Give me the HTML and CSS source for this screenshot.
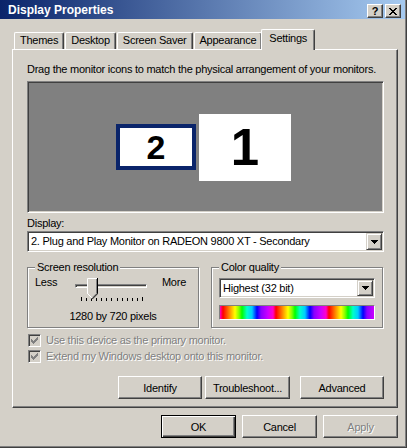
FILE: index.html
```html
<!DOCTYPE html>
<html lang="en">
<head>
  <meta charset="UTF-8">
  <title>Display Properties</title>
  <link rel="stylesheet" href="styles.css">
</head>
<body>
  <div class="window">
    <div class="titlebar">
      <span class="title">Display Properties</span>
      <div class="caption">
        <span class="cbtn">?</span>
        <span class="cbtn"><svg width="8" height="7" viewBox="0 0 8 7"><path d="M0 0h2v1h-2zM6 0h2v1h-2zM1 1h2v1h-2zM5 1h2v1h-2zM2 2h4v1h-4zM3 3h2v1h-2zM2 4h4v1h-4zM1 5h2v1h-2zM5 5h2v1h-2zM0 6h2v1h-2zM6 6h2v1h-2z"/></svg></span>
      </div>
    </div>

    <div class="content">
      <div class="tabs">
        <div class="tab">Themes</div>
        <div class="tab">Desktop</div>
        <div class="tab">Screen Saver</div>
        <div class="tab">Appearance</div>
        <div class="tab active">Settings</div>
      </div>

      <div class="panel">
        <p class="hint">Drag the monitor icons to match the physical arrangement of your monitors.</p>
        <div class="monitors">
          <div class="monitor secondary">2</div>
          <div class="monitor primary">1</div>
        </div>

        <div class="field-label">Display:</div>
        <div class="combo">
          <span class="combo-text">2. Plug and Play Monitor on RADEON 9800 XT - Secondary</span>
          <span class="drop"><svg width="7" height="4" viewBox="0 0 7 4"><path d="M0 0h7v1h-1v1h-1v1h-1v1h-1v-1h-1v-1h-1v-1h-1z"/></svg></span>
        </div>

        <div class="groups">
          <fieldset class="group">
            <legend>Screen resolution</legend>
            <div class="res-row">
              <span class="less">Less</span>
              <div class="slider">
                <div class="groove"></div>
                <svg class="thumb" width="11" height="21" viewBox="0 0 11 21">
                  <path d="M0 0H11V16L5.5 21.5L0 16Z" fill="#d4d0c8"/>
                  <path d="M0.5 16V0.5H10" fill="none" stroke="#fff"/>
                  <path d="M0.5 15.5L5 20" fill="none" stroke="#fff"/>
                  <path d="M10.5 0V15.8L5.3 21" fill="none" stroke="#000"/>
                  <path d="M9.5 1V15.4L5.3 19.6" fill="none" stroke="#808080"/>
                </svg>
                <div class="ticks">
                  <i class="long"></i><i></i><i></i><i></i><i></i><i></i><i></i><i></i><i></i><i></i><i></i><i></i><i class="long"></i>
                </div>
              </div>
              <span class="more">More</span>
            </div>
            <div class="res-value">1280 by 720 pixels</div>
          </fieldset>

          <fieldset class="group">
            <legend>Color quality</legend>
            <div class="combo small">
              <span class="combo-text">Highest (32 bit)</span>
              <span class="drop"><svg width="7" height="4" viewBox="0 0 7 4"><path d="M0 0h7v1h-1v1h-1v1h-1v1h-1v-1h-1v-1h-1v-1h-1z"/></svg></span>
            </div>
            <div class="spectrum"></div>
          </fieldset>
        </div>

        <div class="checks">
          <div class="check">
            <span class="box"><svg width="7" height="7" viewBox="0 0 7 7"><path d="M6 0h1v1h-1zM5 1h2v1h-2zM0 2h1v1h-1zM4 2h3v1h-3zM0 3h2v1h-2zM3 3h3v1h-3zM0 4h5v1h-5zM1 5h3v1h-3zM2 6h1v1h-1z"/></svg></span>
            <span class="disabled">Use this device as the primary monitor.</span>
          </div>
          <div class="check">
            <span class="box"><svg width="7" height="7" viewBox="0 0 7 7"><path d="M6 0h1v1h-1zM5 1h2v1h-2zM0 2h1v1h-1zM4 2h3v1h-3zM0 3h2v1h-2zM3 3h3v1h-3zM0 4h5v1h-5zM1 5h3v1h-3zM2 6h1v1h-1z"/></svg></span>
            <span class="disabled">Extend my Windows desktop onto this monitor.</span>
          </div>
        </div>

        <div class="actions">
          <button class="btn identify">Identify</button>
          <button class="btn trouble">Troubleshoot...</button>
          <button class="btn advanced">Advanced</button>
        </div>
      </div>

      <div class="footer">
        <button class="btn default">OK</button>
        <button class="btn">Cancel</button>
        <button class="btn"><span class="disabled">Apply</span></button>
      </div>
    </div>
  </div>
</body>
</html>
```

FILE: styles.css
```css
* {box-sizing:border-box;}
body {margin:0; background:#d4d0c8; font-family:Tahoma, "Liberation Sans", Arial, sans-serif; font-size:11px; letter-spacing:-0.25px; color:#000;}

.window {width:407px; height:448px; padding:0 1px 1px 0; border-right:1px solid #404040; border-bottom:1px solid #404040; box-shadow:inset -1px -1px 0 #808080; display:flex; flex-direction:column;}

/* caption */
.titlebar {height:19px; flex:none; display:flex; align-items:center; padding:0 4px 0 8px; background:linear-gradient(90deg,#0a246a,#a6caf0); color:#fff; font-weight:bold; font-size:12px; letter-spacing:0;}
.title {flex:1;}
.caption {display:flex; gap:2px; margin-top:3px;}
.cbtn {width:16px; height:14px; display:flex; align-items:center; justify-content:center; background:#d4d0c8; color:#000; border:1px solid; border-color:#fff #404040 #404040 #fff; box-shadow:inset -1px -1px 0 #808080; font-size:11px; line-height:1;}

.content {flex:1; padding:10px 7px 0 12px; display:flex; flex-direction:column;}

/* tabs */
.tabs {display:flex; align-items:flex-end; height:20px; padding-left:2px; gap:1px;}
.tab {height:17px; padding:0 5px; border:1px solid; border-bottom:0; border-color:#fff #404040 #404040 #fff; border-radius:2px 2px 0 0; box-shadow:inset -1px 0 0 #808080; line-height:15px; white-space:nowrap;}
.tab.active {height:21px; margin:0 -2px -1px; padding:0 7px 3px; position:relative; background:#d4d0c8; line-height:16px;}

.panel {flex:none; border:1px solid; border-color:#fff #404040 #404040 #fff; box-shadow:inset -1px -1px 0 #808080; padding:13px 13px 8px 14px;}
.hint {margin:0; line-height:13px; white-space:nowrap;}

/* monitor arrangement */
.monitors {margin-top:5px; height:132px; background:#808080; border:1px solid; border-color:#808080 #fff #fff #808080; box-shadow:inset 1px 1px 0 #404040, inset -1px -1px 0 #d4d0c8; display:flex; align-items:center; justify-content:center; gap:3px; padding-right:4px;}
.monitor {background:#fff; display:flex; align-items:center; justify-content:center; font-family:"Liberation Sans", Arial, sans-serif; font-weight:bold; line-height:1; letter-spacing:0;}
.monitor.secondary {width:80px; height:46px; border:4px solid #0a246a; font-size:34px;}
.monitor.primary {width:92px; height:67px; font-size:51px;}

.field-label {margin-top:4px; line-height:13px;}

/* dropdowns */
.combo {display:flex; height:21px; margin-top:1px; padding:1px; background:#fff; border:1px solid; border-color:#808080 #fff #fff #808080; box-shadow:inset 1px 1px 0 #404040, inset -1px -1px 0 #d4d0c8;}
.combo.small {height:20px;}
.combo-text {flex:1; padding-left:2px; line-height:17px; white-space:nowrap; overflow:hidden;}
.combo.small .combo-text {line-height:16px;}
.drop {width:16px; flex:none; display:flex; align-items:center; justify-content:center; background:#d4d0c8; border:1px solid; border-color:#d4d0c8 #404040 #404040 #d4d0c8; box-shadow:inset 1px 1px 0 #fff, inset -1px -1px 0 #808080;}

/* group boxes */
.groups {display:flex; gap:12px; margin-top:9px;}
.group {margin:0; width:172px; min-width:0; padding:3px 7px 4px; border:1px solid #808080; box-shadow:1px 1px 0 #fff, inset 1px 1px 0 #fff;}
.group legend {padding:0 2px; line-height:13px; background:#d4d0c8;}

.res-row {display:flex; align-items:flex-start;}
.less {width:40px; line-height:11px;}
.more {margin-left:auto; margin-right:5px; line-height:11px;}
.slider {position:relative; width:72px; height:24px; margin-top:1px; padding-top:6px;}
.groove {height:4px; border:1px solid; border-color:#808080 #fff #fff #808080; box-shadow:inset 1px 1px 0 #404040; background:#d4d0c8;}
.thumb {position:absolute; left:12px; top:0;}
.ticks {display:flex; justify-content:space-between; align-items:flex-start; padding:0 4px 0 6px; margin-top:9px;}
.ticks i {width:1px; height:3px; background:#000; margin-top:1px;}
.ticks i.long {height:4px; margin-top:0;}
.res-value {margin-top:8px; text-align:center; line-height:13px;}

.spectrum {height:15px; margin-top:7px; border:1px solid; border-color:#808080 #fff #fff #808080;
  background:repeating-linear-gradient(90deg,#f0c 0,#f00 3px,#ff8000 9px,#ff0 15px,#80ff00 19px,#0f0 22px,#0fc 27px,#0cf 32px,#00f 37px,#80f 41px,#c0f 48px,#f0c 53px);}

/* checkboxes */
.checks {margin-top:4px;}
.check {display:flex; align-items:center; height:16px; gap:5px;}
.box {width:13px; height:13px; margin-left:1px; display:flex; align-items:center; justify-content:center; background:#d4d0c8; border:1px solid; border-color:#808080 #fff #fff #808080; box-shadow:inset 1px 1px 0 #404040; fill:#808080;}
.disabled {color:#808080; text-shadow:1px 1px 0 #fff;}

/* buttons */
.btn {height:23px; padding:0; font:inherit; letter-spacing:inherit; color:#000; background:#d4d0c8; border:1px solid; border-color:#fff #404040 #404040 #fff; box-shadow:inset -1px -1px 0 #808080;}
.btn.default {border-color:#000; box-shadow:inset 1px 1px 0 #fff, inset -1px -1px 0 #404040, inset -2px -2px 0 #808080;}
.actions {display:flex; justify-content:flex-end; margin-top:12px;}
.identify {width:84px; margin-right:3px;}
.trouble {width:85px; margin-right:10px;}
.advanced {width:84px;}
.footer {display:flex; justify-content:flex-end; gap:6px; margin-top:7px;}
.footer .btn {width:75px;}
```
